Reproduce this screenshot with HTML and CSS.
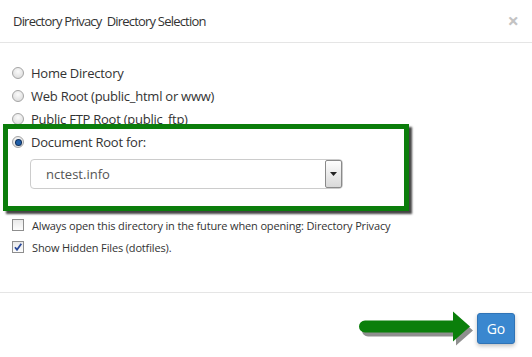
FILE: index.html
```html
<!DOCTYPE html>
<html lang="en">

<head>
  <meta charset="UTF-8" />
  <title>Directory Selection</title>
  <link rel="stylesheet" href="styles.css">
</head>

<body>
  <div class="modal">
    <div class="modal-header">
      <span class="modal-title">Directory Privacy&nbsp; Directory Selection</span>
      <span class="close">&times;</span>
    </div>

    <div class="modal-body">
      <label class="opt"><span class="radio"></span><span>Home Directory</span></label>
      <label class="opt"><span class="radio"></span><span>Web Root (public_html or www)</span></label>
      <label class="opt"><span class="radio"></span><span>Public <abbr title="File Transfer Protocol">FTP</abbr> Root (public_ftp)</span></label>

      <div class="highlight">
        <label class="opt"><span class="radio checked"></span><span>Document Root for:</span></label>
        <div class="select">
          <span class="select-text">nctest.info</span>
          <span class="select-btn">
            <svg width="7" height="4" viewBox="0 0 7 4"><path d="M0 0h7L3.5 4z" fill="#222" /></svg>
          </span>
        </div>
      </div>

      <label class="chk"><span class="box"></span><span>Always open this directory in the future when opening: Directory Privacy</span></label>
      <label class="chk"><span class="box">
          <svg width="10" height="10" viewBox="0 0 10 10"><path d="M2 5.2l2 2.6L8.3 1.8" fill="none" stroke="#2b4a9a" stroke-width="1.8" /></svg>
        </span><span>Show Hidden Files (dotfiles).</span></label>
    </div>

    <div class="modal-footer">
      <svg class="arrow" width="116" height="36" viewBox="0 0 116 36">
        <path d="M7 11.5h88v-9l17 15-17 15v-9H7a5 5 0 0 1 0-12z" fill="#333" opacity="0.55" transform="translate(2 3)" />
        <path d="M6 10.5h88v-9l17 15-17 15v-9H6a5 5 0 0 1 0-12z" fill="#0b7f0b" />
      </svg>
      <button class="go">Go</button>
    </div>
  </div>
</body>

</html>
```

FILE: styles.css
```css
body {
  margin: 0;
  padding: 0;
  background: #fff;
  font-family: 'Open Sans', 'Liberation Sans', sans-serif;
  color: #333;
}

.modal {
  width: 532px;
  height: 357px;
  display: flex;
  flex-direction: column;
}

.modal-header {
  border-bottom: 1px solid #e5e5e5;
  display: flex;
  align-items: center;
  justify-content: space-between;
  padding: 0 13px 0 13px;
  box-sizing: border-box;
  height: 43px;
}

.modal-title {
  font-size: 13px;
  letter-spacing: -0.8px;
}

.close {
  font-size: 20px;
  font-weight: bold;
  color: #c3c3c3;
  margin-top: -2px;
}

.modal-body {
  padding: 18px 0 0 12px;
  height: 250px;
  box-sizing: border-box;
  border-bottom: 1px solid #e5e5e5;
}

.opt {
  display: flex;
  align-items: center;
  height: 23px;
  font-size: 13px;
  letter-spacing: -0.25px;
}

.radio {
  width: 10px;
  height: 10px;
  border-radius: 50%;
  border: 1px solid #a4a4a4;
  background: radial-gradient(circle at 50% 35%, #fbfbfb, #d6d6d6);
  margin-right: 7px;
  flex-shrink: 0;
  display: flex;
  align-items: center;
  justify-content: center;
}

.radio.checked::after {
  content: "";
  width: 5px;
  height: 5px;
  border-radius: 50%;
  background: #1f5ea8;
  box-shadow: 0 0 0 1px #0e2f5a;
}

abbr {
  text-decoration: underline dotted;
}

.highlight {
  position: relative;
  margin: -6px 0 0 -9px;
  width: 392px;
  border: 5px solid #0b7d0b;
  padding: 2px 0 17px 4px;
  box-shadow: 3px 3px 2px #444;
}

.highlight .opt {
  height: 22px;
}

.select {
  margin: 6px 0 0 18px;
  width: 313px;
  height: 30px;
  box-sizing: border-box;
  border: 1px solid #ccc;
  border-radius: 4px;
  display: flex;
  align-items: center;
  justify-content: space-between;
}

.select-text {
  padding-left: 15px;
  font-size: 13px;
  color: #555;
}

.select-btn {
  width: 15px;
  height: 26px;
  border: 1px solid #8a8a8a;
  border-radius: 2px;
  background: linear-gradient(#fdfdfd, #d9d9d9);
  display: flex;
  align-items: center;
  justify-content: center;
}

.chk {
  display: flex;
  align-items: center;
  height: 22px;
  font-size: 11px;
  letter-spacing: -0.15px;
}

.highlight + .chk {
  margin-top: 3px;
}

.box {
  width: 10px;
  height: 10px;
  border: 1px solid #8e8e8e;
  background: linear-gradient(#e9e9e9, #fdfdfd);
  margin-right: 8px;
  display: flex;
  align-items: center;
  justify-content: center;
}

.modal-footer {
  display: flex;
  justify-content: flex-end;
  align-items: center;
  padding: 17px 17px 0 0;
}

.arrow {
  margin-right: 2px;
}

.go {
  width: 38px;
  height: 31px;
  background-color: #3a87cf;
  border: 1px solid #2f73b6;
  border-radius: 3px;
  color: #fff;
  font-family: 'Open Sans', sans-serif;
  font-size: 14px;
  padding: 0;
  box-shadow: 0 2px 4px rgba(0, 0, 0, 0.25);
}
```
